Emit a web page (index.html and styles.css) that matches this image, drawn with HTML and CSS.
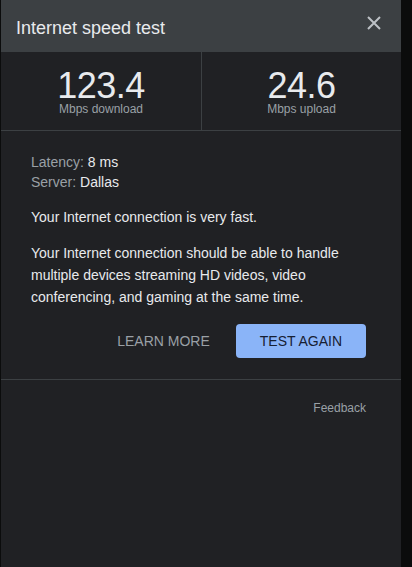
FILE: index.html
```html
<!doctype html>
<html lang="en">
  <head>
    <meta charset="utf-8">
    <meta name="viewport" content="width=device-width, initial-scale=1">
    <title>Internet speed test</title>
    <link rel="stylesheet" href="styles.css">
  </head>
  <body>
    <div id="panel">
      <header>
        <h1>Internet speed test</h1>
        <button id="close" title="Close">
          <svg width="14" height="14" viewBox="0 0 14 14">
            <path d="M1 1L13 13M13 1L1 13" stroke="#bdc1c6" stroke-width="2" fill="none"/>
          </svg>
        </button>
      </header>
      <div id="stats">
        <div class="stat">
          <div class="stat-value">123.4</div>
          <div class="stat-label">Mbps download</div>
        </div>
        <div class="stat">
          <div class="stat-value">24.6</div>
          <div class="stat-label">Mbps upload</div>
        </div>
      </div>
      <div id="main">
        <div class="details">
          <div><span class="muted">Latency:</span> 8 ms</div>
          <div><span class="muted">Server:</span> Dallas</div>
        </div>
        <p>Your Internet connection is very fast.</p>
        <p>Your Internet connection should be able to handle multiple devices streaming HD videos, video conferencing, and gaming at the same time.</p>
        <div class="actions">
          <button class="text-button">LEARN MORE</button>
          <button class="primary-button">TEST AGAIN</button>
        </div>
      </div>
      <footer>
        <a href="#">Feedback</a>
      </footer>
    </div>
  </body>
</html>
```

FILE: styles.css
```css
* {
  box-sizing: border-box;
}

body {
  margin: 0;
  background: #0b0c0c;
  font-family: "Liberation Sans", Arial, sans-serif;
  color: #e8eaed;
}

#panel {
  width: 400px;
  height: 567px;
  margin-left: 1px;
  background: #202124;
}

header {
  height: 52px;
  display: flex;
  align-items: center;
  justify-content: space-between;
  padding: 0 20px 0 15px;
  background: #3c4043;
}

h1 {
  margin: 0;
  padding-top: 4px;
  font-size: 18px;
  font-weight: normal;
  line-height: 20px;
  color: #e8eaed;
}

#close {
  background: none;
  border: 0;
  padding: 0;
  margin-bottom: 6px;
  width: 14px;
  height: 14px;
  cursor: pointer;
}

#close svg {
  display: block;
}

#stats {
  display: grid;
  grid-template-columns: 1fr 1fr;
  height: 79px;
  border-bottom: 1px solid #3c4043;
}

.stat {
  text-align: center;
  padding-top: 18px;
}

.stat + .stat {
  border-left: 1px solid #3c4043;
}

.stat-value {
  font-size: 36px;
  line-height: 32px;
  letter-spacing: -0.5px;
  color: #e8eaed;
}

.stat-label {
  font-size: 12px;
  line-height: 14px;
  color: #9aa0a6;
}

#main {
  padding: 21px 35px 21px 30px;
  border-bottom: 1px solid #3c4043;
  font-size: 14px;
}

.details {
  line-height: 20px;
}

.muted {
  color: #9aa0a6;
}

p {
  margin: 14px 0 0;
  line-height: 22px;
  color: #e8eaed;
}

.actions {
  display: flex;
  justify-content: flex-end;
  align-items: center;
  margin-top: 16px;
}

.actions button {
  font-family: inherit;
  font-size: 14px;
  height: 34px;
  border: 0;
  white-space: nowrap;
  cursor: pointer;
}

.text-button {
  background: none;
  color: #9aa0a6;
  padding: 0;
  margin-right: 26px;
}

.primary-button {
  background: #8ab4f8;
  color: #172033;
  border-radius: 4px;
  padding: 0 24px;
}

footer {
  padding: 20px 35px 0 0;
  text-align: right;
  font-size: 12px;
  line-height: 16px;
}

footer a {
  color: #9aa0a6;
  text-decoration: none;
}
```
